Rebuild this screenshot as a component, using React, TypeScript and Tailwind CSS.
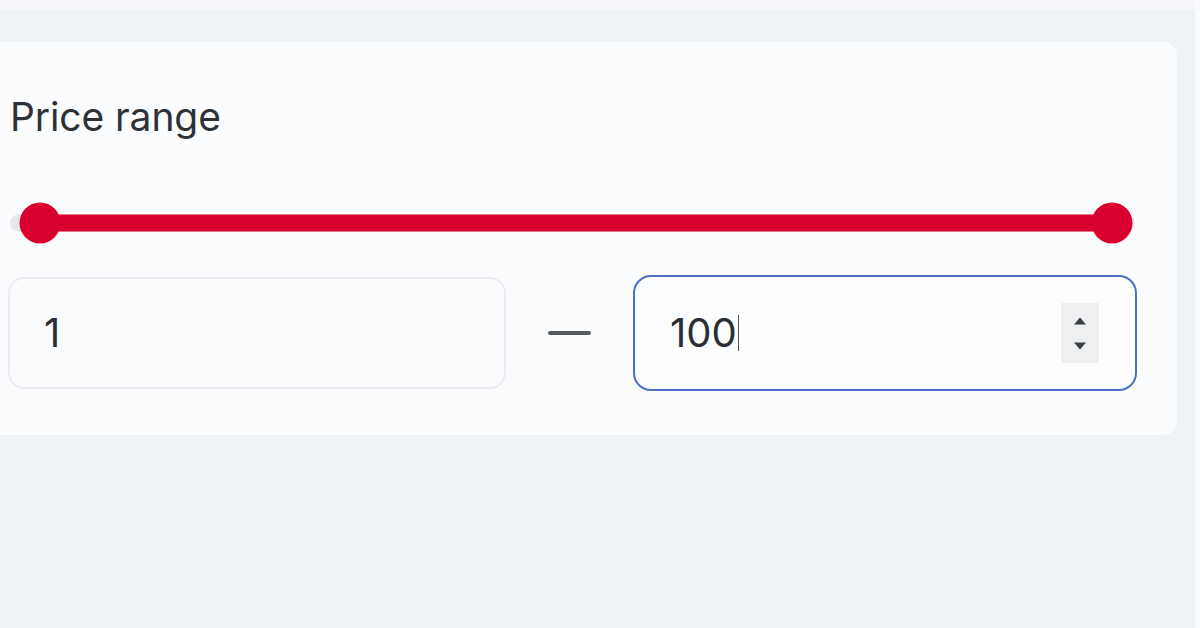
import React from "react";

const MIN = 1;
const MAX = 100;

function RangeSlider({ low, high }: { low: number; high: number }) {
  const lowPct = ((low - MIN) / (MAX - MIN)) * 100;
  const highPct = ((high - MIN) / (MAX - MIN)) * 100;

  return (
    <div className="relative h-[42px] ml-[10px] mr-[42px]">
      {/* rail */}
      <div className="absolute left-0 right-0 top-1/2 -translate-y-1/2 h-[17px] rounded-full bg-[#e6e8ec]" />
      {/* thumbs sit on an inner band so their centres line up with the fill ends */}
      <div className="absolute left-[30px] right-[23px] top-0 bottom-0">
        <div
          className="absolute top-1/2 -translate-y-1/2 h-[17px] bg-[#d9002f]"
          style={{ left: `${lowPct}%`, right: `${100 - highPct}%` }}
        />
        <span
          className="absolute top-1/2 -translate-x-1/2 -translate-y-1/2 w-[41px] h-[41px] rounded-full bg-[#d9002f]"
          style={{ left: `${lowPct}%` }}
        />
        <span
          className="absolute top-1/2 -translate-x-1/2 -translate-y-1/2 w-[41px] h-[41px] rounded-full bg-[#d9002f]"
          style={{ left: `${highPct}%` }}
        />
      </div>
    </div>
  );
}

function Spinner() {
  return (
    <div className="flex flex-col items-center justify-center gap-[17px] w-[38px] h-[60px] bg-[#eeeff1]">
      <svg width="14" height="8" viewBox="0 0 14 8">
        <path d="M7 0.5 L13 7.5 L1 7.5 Z" fill="#3a3d42" />
      </svg>
      <svg width="14" height="8" viewBox="0 0 14 8">
        <path d="M1 0.5 L13 0.5 L7 7.5 Z" fill="#3a3d42" />
      </svg>
    </div>
  );
}

export default function App() {
  return (
    <div
      className="relative w-[1200px] h-[628px] overflow-hidden bg-[#eef2f6] flex"
      style={{ fontFamily: "Inter, 'Open Sans', sans-serif" }}
    >
      <div className="flex-1 flex flex-col">
        <div className="h-[10px] bg-[#f5f7fa]" />
        <div className="mt-[32px] w-[1177px] h-[393px] bg-[#fbfcfd] rounded-r-[14px] pt-[52px]">
          <h3 className="ml-[10px] text-[39px] leading-[46px] text-[#2e3236] font-normal tracking-[-0.1px]">
            Price range
          </h3>

          <div className="mt-[62px]">
            <RangeSlider low={1} high={100} />
          </div>

          <div className="mt-[31px] flex items-center pr-[40px]">
            <div className="ml-[8px] w-[498px] h-[112px] rounded-[16px] border-[2px] border-[#ebedf0] bg-[#fbfcfd] flex items-center pl-[34px]">
              <span className="text-[40px] text-[#2b2e33]">1</span>
            </div>
            <div className="flex-1 flex justify-center">
              <span className="block w-[43px] h-[4px] bg-[#555a60] rounded-full" />
            </div>
            <div className="w-[504px] h-[116px] rounded-[18px] border-[2px] border-[#4d6fc4] bg-[#fcfdfe] flex items-center pl-[35px] pr-[36px]">
              <span className="text-[40px] text-[#2b2e33]">100</span>
              <span className="ml-[1px] w-[1px] h-[36px] bg-[#555]" />
              <div className="flex-1" />
              <Spinner />
            </div>
          </div>
        </div>
      </div>
      <div className="w-[5px] bg-[#fafbfc]" />
    </div>
  );
}
